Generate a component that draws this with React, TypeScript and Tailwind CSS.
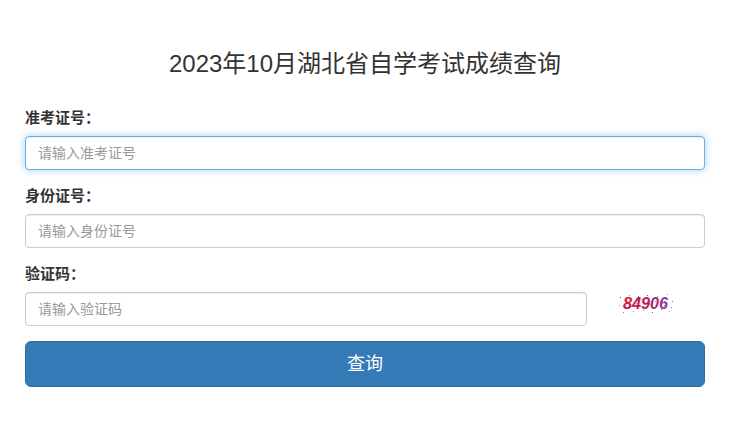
import type { ReactNode } from 'react';

const font = { fontFamily: '"Liberation Sans", "Noto Sans CJK SC", sans-serif' };

// 验证码图片：斜体数字加上随机噪点
const noise: [number, number, string][] = [
  [3, 4, '#c33'], [8, 15, '#66c'], [12, 2, '#999'], [16, 18, '#c6c'], [21, 3, '#3a3'],
  [26, 17, '#999'], [30, 2, '#c36'], [35, 19, '#669'], [40, 3, '#999'], [44, 16, '#c3c'],
  [48, 5, '#36c'], [52, 18, '#999'], [55, 8, '#c63'], [2, 12, '#999'], [6, 19, '#a6a'],
  [19, 10, '#999'], [33, 11, '#c9c'], [47, 12, '#999'], [54, 14, '#66c'], [24, 6, '#c66'],
  [10, 8, '#9c9'], [38, 8, '#999'], [29, 14, '#99c'], [14, 13, '#c99'], [50, 1, '#999'],
];

function Captcha() {
  return (
    <svg width="58" height="21" viewBox="0 0 58 21" className="block">
      <defs>
        <linearGradient id="captcha-fill" x1="0" x2="1" y1="0" y2="0">
          <stop offset="0" stopColor="#d6163a" />
          <stop offset="0.55" stopColor="#b3205f" />
          <stop offset="1" stopColor="#8e3fa8" />
        </linearGradient>
      </defs>
      {noise.map(([x, y, c], i) => (
        <rect key={i} x={x} y={y} width="1" height="1" fill={c} />
      ))}
      <text
        x="6"
        y="16"
        fontSize="17"
        fontWeight="bold"
        fontStyle="italic"
        fontFamily="Liberation Sans, sans-serif"
        textLength="45"
        lengthAdjust="spacingAndGlyphs"
        fill="url(#captcha-fill)"
      >
        84906
      </text>
    </svg>
  );
}

function Field({ label, children }: { label: string; children: ReactNode }) {
  return (
    <div className="mb-[15px]">
      <label className="mb-[7px] block text-[15px] font-bold leading-[22px] text-[#333]">{label}</label>
      {children}
    </div>
  );
}

const inputBase =
  'block h-[34px] rounded-[4px] border bg-white px-3 text-[14px] text-[#555] placeholder:text-[#999] outline-none';

export default function App() {
  return (
    <div className="min-h-screen bg-white" style={font}>
      <div className="ml-[25px] w-[680px] pt-[51px]">
        <h1 className="text-center text-[24px] leading-[26px] text-[#333]">2023年10月湖北省自学考试成绩查询</h1>

        <form className="mt-[30px]" onSubmit={(e) => e.preventDefault()}>
          <Field label="准考证号：">
            <input
              className={`${inputBase} w-full border-[#66afe9] shadow-[inset_0_1px_1px_rgba(0,0,0,0.075),0_0_8px_rgba(102,175,233,0.6)]`}
              placeholder="请输入准考证号"
            />
          </Field>
          <Field label="身份证号：">
            <input
              className={`${inputBase} w-full border-[#ccc] shadow-[inset_0_1px_1px_rgba(0,0,0,0.075)]`}
              placeholder="请输入身份证号"
            />
          </Field>
          <Field label="验证码：">
            <div className="flex items-start">
              <input
                className={`${inputBase} w-[562px] border-[#ccc] shadow-[inset_0_1px_1px_rgba(0,0,0,0.075)]`}
                placeholder="请输入验证码"
              />
              <div className="ml-[30px] mt-[1px]">
                <Captcha />
              </div>
            </div>
          </Field>
          <button
            type="submit"
            className="block h-[46px] w-full rounded-[6px] border border-[#2e6da4] bg-[#337ab7] text-[18px] text-white"
          >
            查询
          </button>
        </form>
      </div>
    </div>
  );
}
